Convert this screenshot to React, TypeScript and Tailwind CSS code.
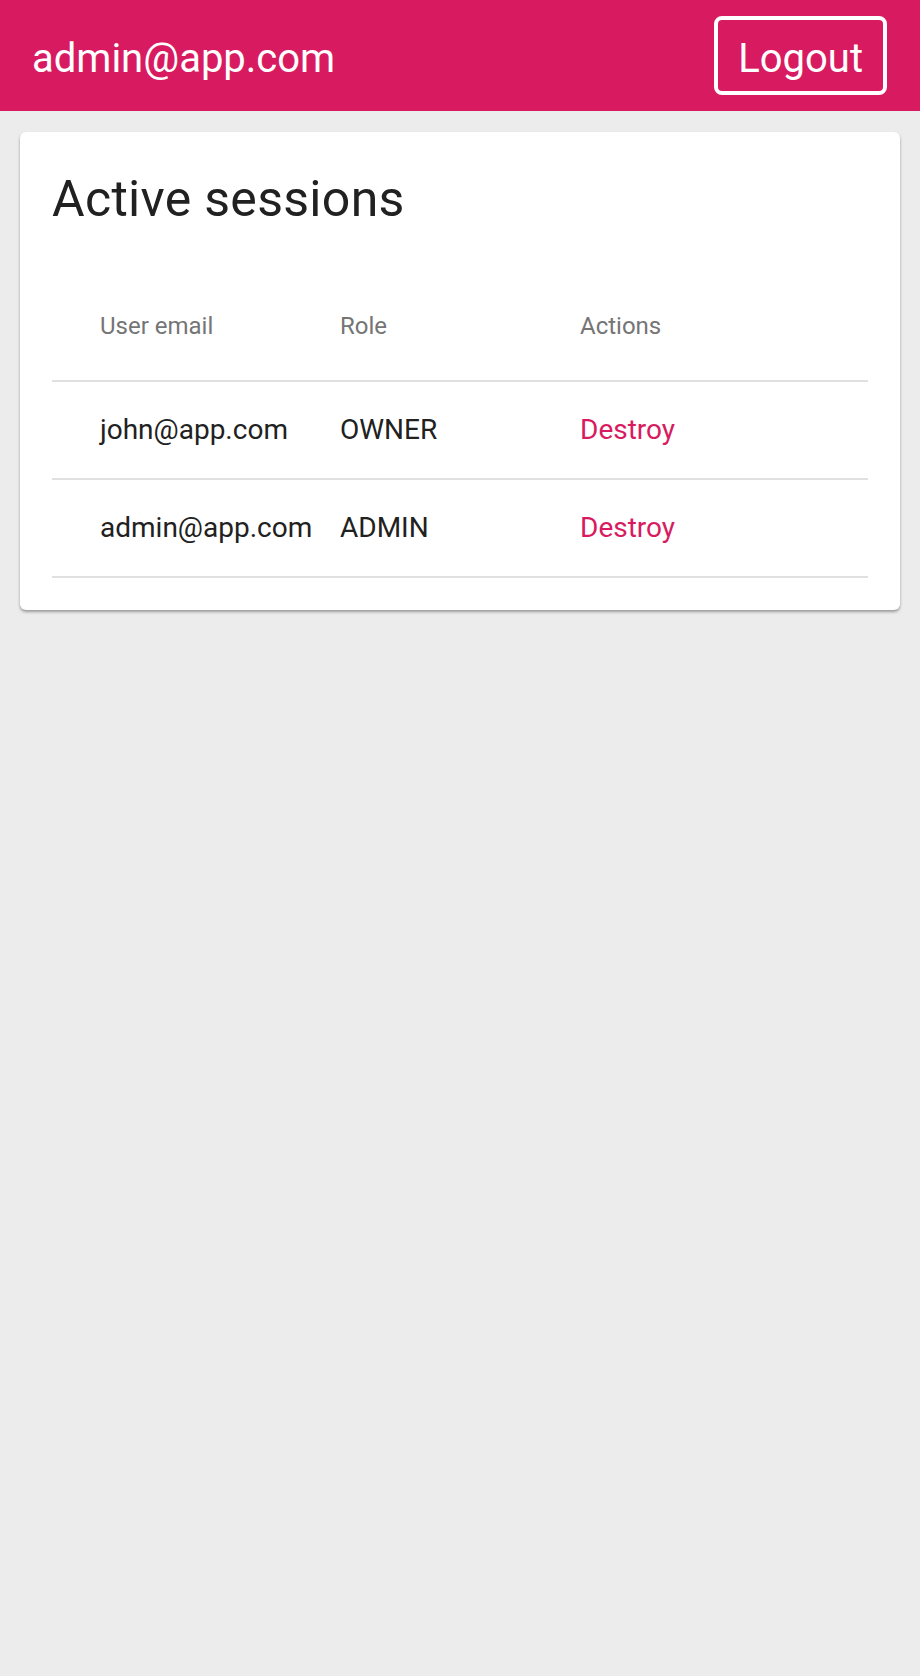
const sessions = [
  { email: 'john@app.com', role: 'OWNER' },
  { email: 'admin@app.com', role: 'ADMIN' },
];

export default function App() {
  return (
    <div className="min-h-[1676px] bg-[#ececec] font-['Roboto',sans-serif]">
      <header className="h-[111px] bg-[#d81b60] flex items-center justify-between pl-[32px] pr-[33px]">
        <span className="text-white text-[40px] leading-none pt-[6px]">admin@app.com</span>
        <button className="h-[79px] px-[20px] pt-[6px] border-[4px] border-white rounded-[8px] text-white text-[40px] leading-none">
          Logout
        </button>
      </header>

      <div className="px-[20px] pt-[21px]">
        <div className="bg-white rounded-[6px] shadow-[0_2px_3px_rgba(0,0,0,0.35)] px-[32px] pt-[32px] pb-[32px]">
          <h1 className="text-[50px] leading-[60px] text-[#212121] pt-[5px] tracking-[0.3px]">Active sessions</h1>

          <div className="mt-[55px]">
            <div className="grid grid-cols-[240px_240px_1fr] h-[98px] items-center pl-[48px] border-b-2 border-[#e0e0e0] text-[24px] text-[#757575]">
              <span className="-mt-[12px]">User email</span>
              <span className="-mt-[12px]">Role</span>
              <span className="-mt-[12px]">Actions</span>
            </div>
            {sessions.map((s) => (
              <div key={s.email}
                className="grid grid-cols-[240px_240px_1fr] h-[98px] items-center pl-[48px] border-b-2 border-[#e0e0e0] text-[28px] text-[#212121]">
                <span>{s.email}</span>
                <span>{s.role}</span>
                <span className="text-[#d81b60] cursor-pointer">Destroy</span>
              </div>
            ))}
          </div>
        </div>
      </div>
    </div>
  );
}
